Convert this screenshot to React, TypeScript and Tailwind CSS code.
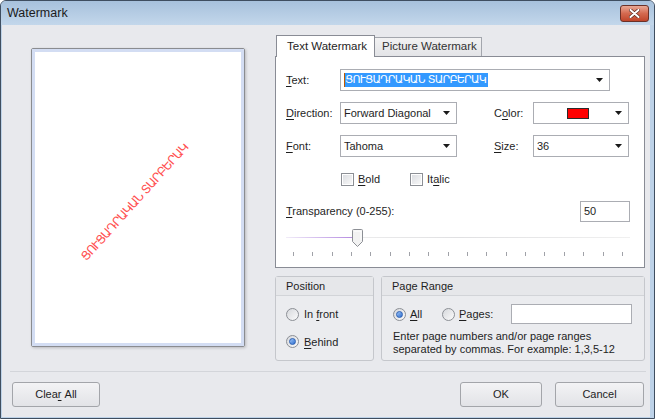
import type { JSX, ReactNode } from 'react'

const ARM = 'ՑՈՒՑԱԴՐԱԿԱՆ ՏԱՐԲԵՐԱԿ'
const armFont = { fontFamily: '"DejaVu Sans", "Noto Sans", sans-serif' }

function Arrow(): JSX.Element {
  return (
    <svg width="7" height="4" viewBox="0 0 7 4" className="shrink-0">
      <path d="M0 0h7L3.5 4z" fill="#1a1a1a" />
    </svg>
  )
}

function Combo({ w, children }: { w: string; children?: ReactNode }): JSX.Element {
  return (
    <div className={`${w} flex h-[22px] items-center border border-[#abadb3] bg-white pl-[2px] pr-[6px]`}>
      <div className="flex min-w-0 flex-1 items-center">{children}</div>
      <Arrow />
    </div>
  )
}

function Radio({ checked }: { checked?: boolean }): JSX.Element {
  return (
    <div className="flex h-[13px] w-[13px] shrink-0 items-center justify-center rounded-full border border-[#8c8f95] bg-gradient-to-br from-[#d6d8dc] to-[#fbfbfb]">
      {checked && (
        <div className="h-[7px] w-[7px] rounded-full border border-[#2b5fb3] bg-gradient-to-br from-[#9cc3f5] to-[#2f6fd0]" />
      )}
    </div>
  )
}

function Check(): JSX.Element {
  return (
    <div className="flex h-[13px] w-[13px] shrink-0 items-center justify-center border border-[#8c8f95] bg-white">
      <div className="h-[9px] w-[9px] bg-gradient-to-br from-[#dcdee2] to-[#f8f8f8]" />
    </div>
  )
}

function Btn({ w, children }: { w: string; children: ReactNode }): JSX.Element {
  return (
    <div className={`${w} flex h-[25px] items-center justify-center rounded-[3px] border border-[#a3a5aa] bg-gradient-to-b from-[#f3f3f5] to-[#e2e3e7] text-[11px] text-[#1e1e1e]`}>
      {children}
    </div>
  )
}

function GroupBox({ w, title, children }: { w: string; title: string; children: ReactNode }): JSX.Element {
  return (
    <div className={`${w} flex h-[85px] flex-col rounded-[3px] border border-[#c5c7cc] bg-[#ebecef]`}>
      <div className="flex h-[19px] items-center border-b border-[#d2d4d8] bg-[#e6e7ea] pl-[10px] text-[11px]">
        {title}
      </div>
      <div className="flex-1">{children}</div>
    </div>
  )
}

export default function App(): JSX.Element {
  const ticks = Array.from({ length: 18 }, (_, i) => i)

  return (
    <div
      className="flex h-[419px] w-[655px] flex-col overflow-hidden rounded-t-[6px] border border-[#3f4e60] bg-[#bdd2e8] text-[#1e1e1e]"
      style={{ fontFamily: '"Liberation Sans", Arial, sans-serif' }}
    >
      {/* title bar */}
      <div className="flex h-[24px] shrink-0 items-center justify-between bg-gradient-to-b from-[#a7c1dc] to-[#c3d7eb] pl-[6px] pr-[5px]">
        <span className="text-[12.5px] text-[#1b1b1b]">Watermark</span>
        <div className="mt-[1px] flex h-[17px] w-[29px] items-center justify-center rounded-[3px] border border-[#6b3128] bg-gradient-to-b from-[#e9a895] via-[#d4694f] to-[#c0452a]">
          <svg width="11" height="9" viewBox="0 0 11 9">
            <path d="M1.5 1l8 7M9.5 1l-8 7" stroke="#5a2a22" strokeWidth="3.4" strokeLinecap="round" />
            <path d="M1.5 1l8 7M9.5 1l-8 7" stroke="#ffffff" strokeWidth="2" strokeLinecap="round" />
          </svg>
        </div>
      </div>

      {/* body */}
      <div className="mb-px ml-px mr-[4px] flex flex-1 flex-col bg-[#e8e9ed]">
        <div className="flex pl-[29px] pt-[10px]">
          {/* preview */}
          <div className="mt-[13px] h-[299px] w-[214px] shrink-0 rounded-[2px] border border-[#8a8c90] bg-white shadow-[1px_1px_3px_rgba(0,0,0,0.2)]">
            <div className="flex h-full w-full items-center justify-center overflow-hidden border-[3px] border-[#d3ddf3]">
              <span
                className="translate-x-[-3px] translate-y-[4px] -rotate-[48deg] whitespace-nowrap text-[12px] tracking-[-0.8px] text-[#ff4f4f]"
                style={armFont}
              >
                {ARM}
              </span>
            </div>
          </div>

          {/* right column */}
          <div className="ml-[30px] flex w-[370px] flex-col">
            {/* tabs */}
            <div className="relative z-10 flex h-[21px] items-end pl-px">
              <div className="mb-[-1px] flex h-[22px] w-[99px] items-center border border-b-0 border-[#898c95] bg-white pl-[10px] text-[11.5px]">
                Text Watermark
              </div>
              <div className="flex h-[19px] w-[107px] items-center border border-b-0 border-l-0 border-[#a3a6ad] bg-gradient-to-b from-[#f2f2f3] to-[#e3e4e7] pl-[7px] text-[11.5px] text-[#333]">
                Picture Watermark
              </div>
            </div>

            {/* panel */}
            <div className="flex h-[212px] flex-col border border-[#898c95] bg-white pl-[10px] pr-[14px] pt-[12px] text-[11px]">
              <div className="flex items-center">
                <span className="w-[54px]">
                  <u className="underline-offset-2">T</u>ext:
                </span>
                <Combo w="w-[270px]">
                  <span className="ml-px h-[14px] w-px bg-[#c05a00]" />
                  <span
                    className="flex h-[14px] items-center bg-[#3399ff] pr-[2px] text-[11px] tracking-[-0.7px] text-white"
                    style={armFont}
                  >
                    {ARM}
                  </span>
                </Combo>
              </div>

              <div className="mt-[11px] flex items-center">
                <span className="w-[54px]">
                  <u className="underline-offset-2">D</u>irection:
                </span>
                <Combo w="w-[117px]">
                  <span className="pl-px">Forward Diagonal</span>
                </Combo>
                <span className="ml-[37px] w-[39px]">
                  C<u className="underline-offset-2">o</u>lor:
                </span>
                <Combo w="w-[96px]">
                  <div className="flex flex-1 justify-center pl-[4px]">
                    <div className="h-[11px] w-[22px] border border-[#2a2a2a] bg-[#ff0000]" />
                  </div>
                </Combo>
              </div>

              <div className="mt-[11px] flex items-center">
                <span className="w-[54px]">
                  <u className="underline-offset-2">F</u>ont:
                </span>
                <Combo w="w-[117px]">
                  <span className="pl-px">Tahoma</span>
                </Combo>
                <span className="ml-[37px] w-[39px]">
                  <u className="underline-offset-2">S</u>ize:
                </span>
                <Combo w="w-[96px]">
                  <span className="pl-px">36</span>
                </Combo>
              </div>

              <div className="mt-[16px] flex h-[13px] items-center pl-[55px]">
                <Check />
                <span className="ml-[4px] w-[52px]">
                  <u className="underline-offset-2">B</u>old
                </span>
                <Check />
                <span className="ml-[4px]">
                  It<u className="underline-offset-2">a</u>lic
                </span>
              </div>

              <div className="mt-[15px] flex h-[21px] items-center justify-between">
                <span>
                  <u className="underline-offset-2">T</u>ransparency (0-255):
                </span>
                <div className="flex h-[21px] w-[50px] items-center border border-[#abadb3] bg-white pl-[3px]">50</div>
              </div>

              {/* slider */}
              <div className="relative mt-[7px] h-[18px] w-[344px]">
                <div className="absolute left-0 right-0 top-[8px] h-px bg-gradient-to-r from-[#f4f4f4] via-[#e0e0e2] to-[#f0f0f0]" />
                <div className="absolute left-0 top-[8px] h-px w-[68px] bg-gradient-to-r from-[#f1ecf8] to-[#b58ae0]" />
                <svg className="absolute left-[66px] top-0" width="11" height="18" viewBox="0 0 11 18">
                  <path d="M1.5 0.5h8a1 1 0 0 1 1 1v11l-5 5l-5-5v-11a1 1 0 0 1 1-1z" fill="#f2f2f2" stroke="#8c8f95" />
                  <path d="M2 2h7v9" stroke="#ffffff" fill="none" />
                </svg>
              </div>
              <div className="mt-[5px] flex w-[344px] justify-between pl-[7px] pr-[7px]">
                {ticks.map((t) => (
                  <div key={t} className="h-[4px] w-px bg-[#a0a2a8]" />
                ))}
              </div>
            </div>

            {/* group boxes */}
            <div className="mt-[8px] flex">
              <GroupBox w="w-[99px]" title="Position">
                <div className="flex flex-col pl-[10px] pt-[10px]">
                  <div className="flex items-center">
                    <Radio />
                    <span className="ml-[5px] text-[11px]">
                      In <u className="underline-offset-2">f</u>ront
                    </span>
                  </div>
                  <div className="mt-[11px] flex items-center">
                    <Radio checked />
                    <span className="ml-[5px] text-[11px]">
                      <u className="underline-offset-2">B</u>ehind
                    </span>
                  </div>
                </div>
              </GroupBox>
              <GroupBox w="ml-[7px] w-[264px]" title="Page Range">
                <div className="flex flex-col pl-[11px] pr-[12px] pt-[8px] text-[11px]">
                  <div className="flex h-[20px] items-center">
                    <Radio checked />
                    <span className="ml-[4px] w-[32px]">
                      <u className="underline-offset-2">A</u>ll
                    </span>
                    <Radio />
                    <span className="ml-[4px]">
                      <u className="underline-offset-2">P</u>ages:
                    </span>
                    <div className="ml-auto h-[20px] w-[121px] border border-[#abadb3] bg-white" />
                  </div>
                  <div className="mt-[6px] leading-[13px]">
                    Enter page numbers and/or page ranges
                    <br />
                    separated by commas. For example: 1,3,5-12
                  </div>
                </div>
              </GroupBox>
            </div>
          </div>
        </div>

        {/* separator */}
        <div className="ml-[8px] mr-[4px] mt-[10px] h-[2px] border-t border-[#d3d5da] border-b-white" />

        {/* buttons */}
        <div className="mt-[9px] flex pl-[10px] pr-[6px]">
          <Btn w="w-[88px]">
            Clea<u className="underline-offset-2">r</u>&nbsp;All
          </Btn>
          <div className="flex-1" />
          <Btn w="w-[82px]">OK</Btn>
          <Btn w="ml-[13px] w-[89px]">Cancel</Btn>
        </div>
      </div>
    </div>
  )
}
